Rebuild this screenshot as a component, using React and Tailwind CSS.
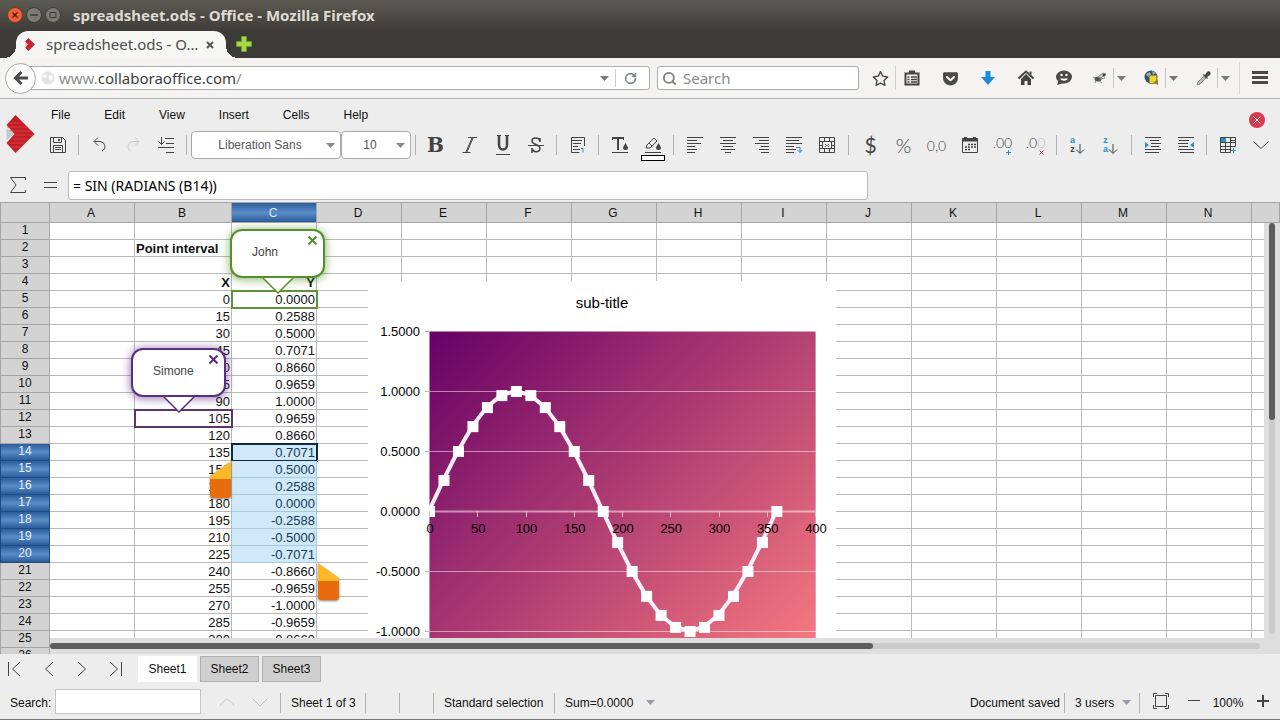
import React, { useState } from 'react'
import { FaRegStar, FaGetPocket, FaHouse, FaArrowLeft } from 'react-icons/fa6'
import { RotateCw, Search } from 'lucide-react'

const menus = ['File', 'Edit', 'View', 'Insert', 'Cells', 'Help']

const columns = ['A', 'B', 'C', 'D', 'E', 'F', 'G', 'H', 'I', 'J', 'K', 'L', 'M', 'N']

const points = Array.from({ length: 25 }, (_, i) => ({
  x: i * 15,
  y: Math.sin((i * 15 * Math.PI) / 180),
}))

const rows = Array.from({ length: 26 }, (_, i) => i + 1)

function format(value) {
  const text = value.toFixed(4)
  return text === '-0.0000' ? '0.0000' : text
}

function cellText(row, column) {
  if (row === 2 && column === 'B') return 'Point interval'
  if (row === 4) return column === 'B' ? 'X' : column === 'C' ? 'Y' : ''
  if (row < 5 || !points[row - 5]) return ''
  if (column === 'B') return String(points[row - 5].x)
  if (column === 'C') return format(points[row - 5].y)
  return ''
}

function Icon({ size = 16, children, className = '' }) {
  return (
    <svg
      width={size}
      height={size}
      viewBox={`0 0 ${size} ${size}`}
      fill="none"
      stroke="#444"
      strokeWidth="1"
      className={className}
      aria-hidden="true"
    >
      {children}
    </svg>
  )
}

function Caret({ className = '' }) {
  return (
    <svg width="9" height="5" viewBox="0 0 9 5" className={className} aria-hidden="true">
      <path d="M0 0h9L4.5 5z" fill="currentColor" />
    </svg>
  )
}

function Logo({ width, height }) {
  return (
    <svg width={width} height={height} viewBox="0 0 28 38" aria-hidden="true">
      <path d="M0 10 9 0 28 19 9 38 0 28l8-9z" fill="#c41d25" />
      <path d="M3 8h12M1 12h20M3 16h22M8 20h19M6 24h16M2 28h16M5 32h10" stroke="#d93a40" strokeWidth="1" />
      <path d="M0 13v12l8-6z" fill="#c3cbd4" />
    </svg>
  )
}

/* Browser chrome */

function TitleBar() {
  return (
    <div className="flex h-[30px] items-center bg-linear-to-b from-[#5c5b53] to-[#3e3d39] pl-[7px]">
      <div className="flex gap-[3px]">
        <button aria-label="Close" className="flex size-4 items-center justify-center rounded-full border border-[#7a3a20] bg-[#ec6138]">
          <Icon size={8}><path d="M1.5 1.5l5 5M6.5 1.5l-5 5" stroke="#5b2110" strokeWidth="1.5" /></Icon>
        </button>
        <button aria-label="Minimize" className="flex size-4 items-center justify-center rounded-full border border-[#3f3e39] bg-[#7b7a73]">
          <Icon size={8}><path d="M0 4h8" stroke="#3c3b37" strokeWidth="1.5" /></Icon>
        </button>
        <button aria-label="Maximize" className="flex size-4 items-center justify-center rounded-full border border-[#3f3e39] bg-[#7b7a73]">
          <Icon size={8}><path d="M1 1.5h6v5H1z" stroke="#3c3b37" /></Icon>
        </button>
      </div>
      <h1 className="ml-3 text-[15px] leading-none font-bold text-[#dfdbd2]">spreadsheet.ods - Office - Mozilla Firefox</h1>
    </div>
  )
}

function TabBar() {
  return (
    <div className="flex h-7 items-end bg-[#3c3b37] pl-1">
      <span className="size-3 bg-[radial-gradient(circle_at_0_0,transparent_12px,#f6f6f5_12px)]" />
      <div className="flex h-[27px] w-[210px] items-center rounded-t-[12px] bg-[#f6f6f5] pr-3 pl-2">
        <Logo width={12} height={13} />
        <span className="ml-2.5 flex-1 text-[15px] leading-none whitespace-nowrap text-[#4c4c4c]">spreadsheet.ods - O…</span>
        <button aria-label="Close tab">
          <Icon size={8}><path d="M1 1l6 6M7 1l-6 6" stroke="#555" strokeWidth="2" /></Icon>
        </button>
      </div>
      <span className="size-3 bg-[radial-gradient(circle_at_100%_0,transparent_12px,#f6f6f5_12px)]" />
      <button aria-label="New tab" className="mb-1.5 -ml-0.5">
        <Icon><path d="M5.5.5h5v5h5v5h-5v5h-5v-5h-5v-5h5z" fill="#a5d848" stroke="#6f9e2c" /></Icon>
      </button>
    </div>
  )
}

function NavButton({ label, className = 'w-[38px]', children }) {
  return (
    <button aria-label={label} className={`flex h-6 items-center justify-center text-[#4a4a4a] ${className}`}>
      {children}
    </button>
  )
}

function SplitButton({ label, children }) {
  return (
    <div className="flex w-[52px] items-center pl-1">
      <NavButton label={label} className="w-[26px]">{children}</NavButton>
      <button aria-label={`${label} options`} className="flex h-5 w-[15px] items-center justify-center border-l border-[#c4c4c4] text-[#777]">
        <Caret />
      </button>
    </div>
  )
}

function NavBar() {
  return (
    <div className="flex h-[41px] items-center border-b border-[#b0b0b0] bg-[#f4f3f2] pl-[5px]">
      <button aria-label="Back" className="z-10 flex size-[31px] shrink-0 items-center justify-center rounded-full border border-[#a8a8a8] bg-[#fbfbfb]">
        <Icon><path d="M8.500 2L2.500 8l6 6M3 8h12" stroke="#4a4a4a" strokeWidth="3" /></Icon>
      </button>
      <div className="-ml-2 flex h-6 flex-1 items-center rounded-r-[3px] border border-[#aaa] bg-white pl-3">
        <Icon size={14}>
          <circle cx="7" cy="7" r="6.5" fill="#e2e2e2" stroke="none" />
          <path d="M3 3l3 1-1 3-3-1zM8 5l3-1 1 3-2 3-2-2z" fill="#fff" stroke="none" />
        </Icon>
        <a href="#address" className="ml-1 flex-1 text-[15px] leading-none text-[#8e8e8e]">
          www.<span className="text-[#3c3c3c]">collaboraoffice.com</span>/
        </a>
        <button aria-label="History" className="px-1.5 text-[#777]"><Caret /></button>
        <button aria-label="Reload" className="flex h-[18px] w-[34px] items-center justify-center border-l border-[#ccc] pr-1">
          <RotateCw size={13} color="#7c868c" strokeWidth={3} />
        </button>
      </div>
      <label className="ml-[7px] flex h-6 w-[202px] items-center gap-1.5 rounded-[3px] border border-[#aaa] bg-white pl-1">
        <Search size={15} color="#7c7c7c" strokeWidth={3} className="shrink-0" />
        <input aria-label="Search the web" placeholder="Search" className="w-full text-[15px] leading-none placeholder:text-[#8a8a8a] focus:outline-none" />
      </label>
      <div className="ml-[7px] flex items-center">
        <NavButton label="Bookmark" className="w-[30px] border-r border-[#d0d0d0]"><FaRegStar size={17} /></NavButton>
        <NavButton label="Bookmarks" className="w-[32px]">
          <Icon>
            <path d="M1.5 3.5h13v11h-13z" strokeWidth="2" />
            <path d="M5 2h6" strokeWidth="3" />
            <path d="M3.5 7h2M7 7h6M3.5 9.5h2M7 9.5h6M3.5 12h2M7 12h6" strokeWidth="1.5" />
          </Icon>
        </NavButton>
        <NavButton label="Pocket" className="w-[41px] pl-[3px]"><FaGetPocket size={17} /></NavButton>
        <NavButton label="Downloads">
          <Icon><path d="M5.5 1h5v6H15l-7 8-7-8h4.5z" fill="#1e8ad6" stroke="none" /></Icon>
        </NavButton>
        <NavButton label="Home">
          <Icon>
            <path d="M.5 8.5L8 1.500l7.500 7" strokeWidth="2" />
            <path d="M3 9l5-5 5 5v6H9.500v-4h-3v4H3zM11.500 1.500h2V5l-2-2z" fill="#444" stroke="none" />
          </Icon>
        </NavButton>
        <NavButton label="Chat">
          <Icon>
            <ellipse cx="8" cy="7" rx="8" ry="6.5" fill="#4a4a4a" stroke="none" />
            <path d="M1 15l2-5 5 3z" fill="#4a4a4a" stroke="none" />
            <circle cx="5.5" cy="5" r="1.2" fill="#fff" stroke="none" />
            <circle cx="10.5" cy="5" r="1.2" fill="#fff" stroke="none" />
            <path d="M4 8.5c1.5 3 6.5 3 8 0z" fill="#fff" stroke="none" />
          </Icon>
        </NavButton>
        <SplitButton label="Debugger">
          <Icon>
            <ellipse cx="6" cy="9" rx="3.5" ry="2.5" fill="#555" stroke="none" />
            <path d="M6 7l5-4 3 1-5 4zM8 9l5-1M7 11l3 2M4 11l-1 2M3 8L1 7" stroke="#888" fill="#ccc" />
            <circle cx="12" cy="5" r="1.5" fill="#444" stroke="none" />
          </Icon>
        </SplitButton>
        <SplitButton label="Proxy">
          <Icon>
            <circle cx="7" cy="7" r="6.5" fill="#2d4f7c" stroke="none" />
            <path d="M2 4l4-2 1 3-3 2zM8 1l4 2-3 2z" fill="#9cb4a0" stroke="none" />
            <path d="M5.5 5.5h7v8h-7z" fill="#f2d231" stroke="#a88a17" />
            <path d="M9 13l5-4v6z" fill="#8c8a3a" stroke="none" />
          </Icon>
        </SplitButton>
        <SplitButton label="Color picker">
          <Icon>
            <path d="M1 15l1-3 6-6 2 2-6 6z" fill="#bbb" stroke="#888" />
            <path d="M7 5l4 4 1-1-1-1 3-2c2-2-1-5-3-3L9 5 8 4z" fill="#444" stroke="none" />
          </Icon>
        </SplitButton>
        <button aria-label="Open menu" className="flex h-8 w-[41px] items-center justify-center border-l border-[#d8d8d8]">
          <Icon><path d="M0 2.5h16M0 7.5h16M0 12.5h16" strokeWidth="3" stroke="#4a4a4a" /></Icon>
        </button>
      </div>
    </div>
  )
}

/* Office toolbars */

function Sep({ className = 'w-[9px]' }) {
  return (
    <div className={`flex shrink-0 justify-center ${className}`}>
      <span className="h-5 w-px bg-[#b4b4b4]" />
    </div>
  )
}

function Tool({ label, className = '', children }) {
  return (
    <button aria-label={label} title={label} className={`relative flex h-7 w-[33px] shrink-0 items-center justify-center text-[#444] ${className}`}>
      {children}
    </button>
  )
}

function ToolSelect({ label, value, className }) {
  return (
    <div className={`relative h-7 shrink-0 ${className}`}>
      <select aria-label={label} className="size-full appearance-none rounded-[4px] border border-[#aaa] bg-white pr-3 text-[12px] text-[#555] [text-align-last:center]">
        <option>{value}</option>
      </select>
      <Caret className="pointer-events-none absolute top-3 right-1.5 text-[#888]" />
    </div>
  )
}

function SortIcon({ first, last }) {
  return (
    <span className="flex items-end">
      <span className="flex flex-col text-[9px] leading-[9px] font-bold">
        <span className="text-[#2b8fc4]">{first}</span>
        <span className={last === 'a' ? 'text-[#2b8fc4]' : 'text-[#444]'}>{last}</span>
      </span>
      <Icon size={10}><path d="M5 0v9M1 5.500l4 4 4-4" /></Icon>
    </span>
  )
}

function Toolbar() {
  return (
    <div className="flex h-8 items-center">
      <Tool label="Save">
        <Icon>
          <path d="M.5.5h12l3 3v12H.5zM3.5.5v5h8v-5M3.500 15.500v-7h9v7M5 10.500h6M5 12.500h6" />
          <path d="M9 2v2" strokeWidth="2" />
        </Icon>
      </Tool>
      <Sep />
      <Tool label="Undo"><Icon><path d="M6 .5L2 4.500l4 4M2.500 4.500H8a5 5 0 0 1 2 9.500" /></Icon></Tool>
      <Tool label="Redo"><Icon><path d="M10 .5l4 4-4 4M13.500 4.500H8A5 5 0 0 0 6 14" stroke="#c8c8c8" /></Icon></Tool>
      <Tool label="Line spacing">
        <Icon><path d="M3.5 0v7M.5 4.5l3 3 3-3M7 1.5h9M8 6.5h8M0 10.5h16M8 15.5h8" /></Icon>
      </Tool>
      <Sep />
      <ToolSelect label="Font name" value="Liberation Sans" className="w-[150px]" />
      <ToolSelect label="Font size" value="10" className="w-[70px]" />
      <Sep />
      <Tool label="Bold" className="pr-0.5 font-['DejaVu_Serif',serif] text-[20px] font-bold">B</Tool>
      <Tool label="Italic">
        <Icon><path d="M6 .5h9M.5 15.5h8M11 1L5 15M10 1L4 15" /></Icon>
      </Tool>
      <Tool label="Underline">
        <Icon size={20}>
          <path d="M4 .5h4M12 .5h4M3 19.500h14" />
          <path d="M6 1v9c0 6 8 6 8 0V1" strokeWidth="2.500" />
        </Icon>
      </Tool>
      <Tool label="Strikethrough">
        <Icon><path d="M12 5V1M12 4C11 0 4 0 4 4c0 4 8 3 8 7.5 0 4.5-7 4-8 0M4 11v5" strokeWidth="1.5" /><path d="M0 8.5h16" /></Icon>
      </Tool>
      <Sep />
      <Tool label="Wrap text">
        <Icon>
          <path d="M14.5 9V.5H1.5v15h8M1 3.5h11M3 6.5h8M3 9.5h5M3 12.5h7" />
          <path d="M11 11.5h2v4" stroke="#2b8fc4" />
        </Icon>
      </Tool>
      <Sep />
      <Tool label="Font color">
        <Icon>
          <path d="M0 1h12M6 1v12" strokeWidth="2" />
          <path d="M0 15.5h16M.5 0v3M11.500 0v3" />
          <path d="M13.5 6l2.5 4.5a2.500 2.500 0 1 1-5 0z" fill="#444" stroke="none" />
        </Icon>
      </Tool>
      <Tool label="Background color">
        <Icon>
          <path d="M2 8l7-7 3 3-7 7H1zM4 6l3 3M0 15.5h16" />
          <path d="M13.5 6l2.5 4.5a2.500 2.500 0 1 1-5 0z" fill="#444" stroke="none" />
        </Icon>
        <span className="absolute -bottom-0.5 h-[6px] w-6 border border-black bg-white" />
      </Tool>
      <Sep />
      <Tool label="Align left"><Icon><path d="M0 .5h16M0 3.5h10M0 6.5h14M0 9.5h8M0 12.5h10M0 15.5h8" /></Icon></Tool>
      <Tool label="Center"><Icon><path d="M0 .5h16M3 3.5h10M0 6.5h16M3 9.5h10M1 12.5h14M5 15.5h6" /></Icon></Tool>
      <Tool label="Align right"><Icon><path d="M0 .5h16M6 3.5h10M2 6.5h14M8 9.5h8M6 12.5h10M8 15.5h8" /></Icon></Tool>
      <Tool label="Wrap">
        <Icon><path d="M0 .5h16M0 3.5h13M0 6.5h16M0 9.5h8M0 12.5h10M0 15.5h8" /><path d="M10 10.5h4v5M11.5 13l2.5 2.5 2-2.5" stroke="#2b8fc4" /></Icon>
      </Tool>
      <Tool label="Merge cells">
        <Icon><path d="M.5.5h15v15H.5zM0 4.5h16M0 11.5h16M5.5 0v5M10.5 0v5M5.5 11v5M10.5 11v5M0 8.5h3M13 8.5h3M3.5 4v8M12.5 4v8M6 7l1.5 1.5L6 10M10 7L8.5 8.5 10 10" /></Icon>
      </Tool>
      <Sep className="w-[11px]" />
      <Tool label="Currency" className="font-['Lato',sans-serif] text-[21px]">$</Tool>
      <Tool label="Percent" className="font-['Lato',sans-serif] text-[20px] font-light">%</Tool>
      <Tool label="Number" className="font-['Lato',sans-serif] text-[14px] font-light">0,0</Tool>
      <Tool label="Date">
        <Icon><path d="M.5 1.5h15v14H.5z" /><path d="M0 3h16M3.5 0v3M12.5 0v3" strokeWidth="3" /><path d="M6 7.5h2M9 7.5h2M12 7.5h2M3 10h2M6 10h2M9 10h2M12 10h2M3 12.5h2M6 12.5h2" strokeWidth="1.5" /></Icon>
      </Tool>
      <Tool label="Add decimal place" className="pb-1.5 font-['Lato',sans-serif] text-[14px] font-light">
        .00
        <Icon size={5} className="absolute right-2 bottom-1"><path d="M0 2.5h5M2.5 0v5" stroke="#2b8fc4" /></Icon>
      </Tool>
      <Tool label="Delete decimal place" className="pb-1.5 font-['Lato',sans-serif] text-[14px] font-light">
        .0<span className="text-[#bbb]">0</span>
        <Icon size={5} className="absolute right-2 bottom-1"><path d="M.5.5l4 4M4.5.5l-4 4" stroke="#a8485a" /></Icon>
      </Tool>
      <Sep />
      <Tool label="Sort ascending"><SortIcon first="a" last="z" /></Tool>
      <Tool label="Sort descending"><SortIcon first="z" last="a" /></Tool>
      <Sep />
      <Tool label="Increase indent">
        <Icon><path d="M0 .5h16M5 3.5h9M6 6.5h10M6 9.5h8M0 12.5h16M0 15.5h14" /><path d="M0 5v6l4-3z" fill="#2b8fc4" stroke="none" /></Icon>
      </Tool>
      <Tool label="Decrease indent">
        <Icon><path d="M0 .5h16M1 3.5h10M0 6.5h10M1 9.5h9M0 12.5h16M2 15.5h14" /><path d="M16 5v6l-4-3z" fill="#2b8fc4" stroke="none" /></Icon>
      </Tool>
      <Sep />
      <Tool label="Insert table">
        <Icon><path d="M.5.5h15v9M.5 5.5h15M.5 9.5h15M.5 12.5h10M.5.5v15h10M5.5.5v15M10.5.5v15M10 3.5h5" /><path d="M1 1h5v4H1z" fill="#2b8fc4" stroke="none" /><path d="M11 13.5h5M13.5 11v5" stroke="#2b8fc4" /></Icon>
      </Tool>
      <Tool label="More"><Icon><path d="M.5 4.5l7.500 7 7.500-7" /></Icon></Tool>
    </div>
  )
}

function OfficeHeader() {
  const [formula, setFormula] = useState('= SIN (RADIANS (B14))')
  return (
    <header className="bg-[#ededed]">
      <div className="flex h-[72px] pt-1.5">
        <div className="w-[41px] shrink-0 pt-2.5 pl-[6px]">
          <Logo width={29} height={38} />
        </div>
        <div className="flex-1">
          <div className="flex h-5 items-center justify-between pr-[15px] pl-2.5">
            <nav className="flex gap-[34px] text-[12px] leading-none text-[#111]">
              {menus.map((name) => (
                <a key={name} href={`#${name.toLowerCase()}`}>{name}</a>
              ))}
            </nav>
            <button aria-label="Close document" className="mt-2.5 flex size-4 items-center justify-center rounded-full bg-[#d63a4f]">
              <Icon size={8}><path d="M.5.5l7 7M7.5.5l-7 7" stroke="#fff" /></Icon>
            </button>
          </div>
          <div className="mt-1"><Toolbar /></div>
        </div>
      </div>
      <div className="flex h-[31px] items-start gap-[18px] pl-2.5">
        <button aria-label="Sum" className="mt-1.5">
          <Icon><path d="M15.5 3V.5H.5L6 8 .5 15.5h15V13" /></Icon>
        </button>
        <button aria-label="Formula" className="mt-1.5">
          <Icon size={13} className="my-0.5"><path d="M0 3.5h13M0 8.5h13" /></Icon>
        </button>
        <input
          aria-label="Formula bar"
          value={formula}
          onChange={(e) => setFormula(e.target.value)}
          className="-ml-[7px] h-[29px] max-w-[800px] flex-1 rounded-[3px] border border-[#bbb] bg-white px-1 font-['Noto_Sans',sans-serif] text-[14px] text-black"
        />
      </div>
    </header>
  )
}

/* Sheet */

function Presence({ name, tone }) {
  const [open, setOpen] = useState(true)
  const john = tone === 'green'
  const color = john ? '#54902a' : '#5c2d82'
  return (
    <>
      <span className={`absolute -top-px -right-0.5 -bottom-0.5 -left-px z-10 border-2 ${john ? 'border-[#5f9336]' : 'border-[#5c3570]'}`} />
      {open && (
        <div className={`absolute bottom-[13px] z-20 w-[95px] text-left ${john ? '-left-0.5' : '-left-1'}`}>
          <div className={`flex h-[49px] items-center rounded-[12px] border-2 bg-white pb-1 pl-5 text-[12px] text-[#444] ${john ? 'border-[#54902a] shadow-[0_1px_9px_1px_rgba(84,144,42,0.6)]' : 'border-[#5c2d82] shadow-[0_1px_9px_1px_rgba(92,45,130,0.6)]'}`}>
            {name}
            <button aria-label={`Dismiss ${name}`} onClick={() => setOpen(false)} className="absolute top-[7px] right-2">
              <Icon size={9}><path d="M.5.5l8 8M8.5.5l-8 8" stroke={color} strokeWidth="2" /></Icon>
            </button>
          </div>
          <svg width="32" height="18" viewBox="0 0 32 18" className="mx-auto -mt-0.5 block" aria-hidden="true">
            <path d="M1 2L16 17 31 2z" fill="#fff" />
            <path d="M1 2L16 17 31 2" fill="none" stroke={color} strokeWidth="1.5" />
          </svg>
        </div>
      )}
    </>
  )
}

function Handle({ flip, className }) {
  return (
    <svg width="23" height="39" viewBox="0 0 23 39" className={`absolute z-10 drop-shadow-[0_1px_1px_rgba(0,0,0,0.5)] ${className}`} aria-hidden="true">
      <g transform={flip ? 'translate(23 0) scale(-1 1)' : undefined}>
        <path d="M1 0l21 15v5H1z" fill="#fbb829" />
        <path d="M1 18h21v16a3 3 0 0 1-3 3H4a3 3 0 0 1-3-3z" fill="#e86c0e" />
      </g>
    </svg>
  )
}

function Cell({ row, column }) {
  const selected = column === 'C' && row >= 14 && row <= 20
  const bold = row === 2 || row === 4
  return (
    <td
      className={`relative h-[17px] border-r border-b p-0 pt-0.5 text-[13px] leading-[14px] whitespace-nowrap ${
        selected ? 'border-[#a9c9dc] bg-[#cfe9f8] text-[#173a55]' : 'border-[#b9b9b9] text-[#111]'
      } ${bold ? 'font-bold' : ''} ${row === 2 ? 'pl-px text-left' : 'pr-px text-right'}`}
    >
      {cellText(row, column)}
      {column === 'C' && row === 5 && <Presence name="John" tone="green" />}
      {column === 'B' && row === 12 && <Presence name="Simone" tone="purple" />}
      {column === 'C' && row === 14 && <span className="absolute -top-px -right-0.5 -bottom-0.5 -left-px border-2 border-[#0d2b45]" />}
      {column === 'C' && row === 15 && <Handle flip className="top-0 -left-[23px]" />}
      {column === 'C' && row === 20 && <Handle className="top-[17px] left-[85px]" />}
    </td>
  )
}

const plotX = (x) => 61 + (x * 386) / 400
const plotY = (y) => 230 - y * 120

function Chart() {
  return (
    <svg width="468" height="440" viewBox="0 0 468 440" className="absolute top-[79px] left-[368px] bg-white text-[13px]" role="img" aria-label="Sine chart">
      <defs>
        <linearGradient id="plot" gradientUnits="userSpaceOnUse" x1="61" y1="50" x2="431" y2="420">
          <stop offset="0" stopColor="#660066" />
          <stop offset="1" stopColor="#ff8080" />
        </linearGradient>
      </defs>
      <text x="234" y="27" textAnchor="middle" fontSize="15">sub-title</text>
      <rect x="61" y="50" width="387" height="360" fill="url(#plot)" />
      <path d="M61.5 50v360M447.5 50v360" stroke="#d9b3cc" opacity="0.7" />
      {[1.5, 1, 0.5, 0, -0.5, -1].map((v) => (
        <g key={v}>
          <path d={`M61 ${plotY(v) + 0.5}h387`} stroke="#fff" strokeWidth={v === 0 ? 2 : 1} opacity="0.5" />
          <path d={`M57 ${plotY(v) + 0.5}h4`} stroke="#b3b3b3" />
          <text x="52" y={plotY(v) + 5} textAnchor="end">{v.toFixed(4)}</text>
        </g>
      ))}
      <polyline points={points.map((p) => `${plotX(p.x)},${plotY(p.y)}`).join(' ')} fill="none" stroke="#ffeefa" strokeWidth="4" />
      {points.map((p) => (
        <rect key={p.x} x={plotX(p.x) - 5} y={plotY(p.y) - 5} width="11" height="11" fill="#fff" />
      ))}
      {[0, 50, 100, 150, 200, 250, 300, 350, 400].map((v) => (
        <g key={v}>
          <path d={`M${Math.round(plotX(v)) + 0.5} 230v6`} stroke="#e0b9cc" />
          <text x={plotX(v) + 1} y="252" textAnchor="middle">{v}</text>
        </g>
      ))}
    </svg>
  )
}

function Sheet() {
  return (
    <main className="relative min-h-0 flex-1 overflow-hidden bg-white">
      <table className="w-full table-fixed border-separate border-spacing-0">
        <colgroup>
          <col className="w-[50px]" />
          {columns.map((c) => (
            <col key={c} className={c === 'B' ? 'w-[97px]' : 'w-[85px]'} />
          ))}
          <col />
        </colgroup>
        <thead>
          <tr className="text-[12px] leading-none">
            <th className="h-[21px] border border-[#a5a5a5] bg-[#d3d3d3] p-0" />
            {columns.map((c) => (
              <th
                key={c}
                scope="col"
                className={`border-y border-r border-[#a5a5a5] p-0 pr-0.5 font-normal ${
                  c === 'C' ? 'bg-linear-to-b from-[#2c5d9c] via-[#5a8cc6] to-[#2c5d9c] text-[#dbe8f6]' : 'bg-[#d3d3d3] text-[#111]'
                }`}
              >
                {c}
              </th>
            ))}
            <th className="border-y border-r border-[#a5a5a5] bg-[#d3d3d3] p-0" />
          </tr>
        </thead>
        <tbody>
          {rows.map((row) => (
            <tr key={row}>
              <th
                scope="row"
                className={`h-[17px] border-x border-b p-0 pb-px text-[12px] leading-[15px] font-normal ${
                  row >= 14 && row <= 20
                    ? 'border-[#1f4a80] bg-linear-to-b from-[#2c5d9c] via-[#5a8cc6] to-[#2c5d9c] text-[#e6eff9]'
                    : 'border-[#a5a5a5] bg-[#d3d3d3] text-[#111]'
                }`}
              >
                {row}
              </th>
              {columns.map((c) => (
                <Cell key={c} row={row} column={c} />
              ))}
              <td className="border-b border-[#b9b9b9] p-0" />
            </tr>
          ))}
        </tbody>
      </table>
      <Chart />
      <div className="absolute top-[21px] right-0 bottom-0 w-4 bg-[#dedede] pb-5">
        <div className="mx-[5px] h-full rounded-full bg-[#cbcbcb]">
          <div className="h-[48%] rounded-full bg-[#5c5d5c]" />
        </div>
      </div>
      <div className="absolute right-0 bottom-0 left-[50px] h-4 bg-[#dedede] pt-[5px] pr-5">
        <div className="h-[6px] rounded-full bg-[#cbcbcb]">
          <div className="h-full w-[68%] rounded-full bg-[#5c5d5c]" />
        </div>
      </div>
    </main>
  )
}

/* Bottom bars */

function SheetTabs() {
  const [active, setActive] = useState('Sheet1')
  return (
    <div className="flex h-[30px] items-center bg-[#ededed] pb-px">
      <div className="flex w-[138px]">
        <Tool label="First sheet"><Icon className="-ml-1"><path d="M1.5 1v14M13 1L5.5 8l7.500 7" /></Icon></Tool>
        <Tool label="Previous sheet"><Icon><path d="M11 1L3.5 8l7.500 7" /></Icon></Tool>
        <Tool label="Next sheet"><Icon><path d="M3 1l7.500 7L3 15" /></Icon></Tool>
        <Tool label="Last sheet"><Icon><path d="M2 1l7.500 7L2 15M13.5 1v14" /></Icon></Tool>
      </div>
      <div className="flex gap-[3px]">
        {['Sheet1', 'Sheet2', 'Sheet3'].map((name) => (
          <button
            key={name}
            onClick={() => setActive(name)}
            className={`h-[26px] w-[59px] border text-[12px] text-[#111] ${
              name === active ? 'border-white bg-white' : 'border-[#b0b0b0] bg-[#cfcfcf]'
            }`}
          >
            {name}
          </button>
        ))}
      </div>
    </div>
  )
}

function StatusSelect({ label, value, className }) {
  return (
    <div className={`relative flex items-center ${className}`}>
      <select aria-label={label} className="w-full appearance-none bg-transparent">
        <option>{value}</option>
      </select>
      <Caret className="pointer-events-none absolute right-0 text-[#99a]" />
    </div>
  )
}

function StatusBar() {
  return (
    <footer className="flex h-9 items-center border-b border-[#777] bg-[#ededed] pt-0.5 pl-2.5 text-[12px] text-[#111]">
      <label htmlFor="find" className="w-[45px]">Search:</label>
      <input id="find" className="mb-0.5 h-[25px] w-[146px] border border-[#c4c4c4] bg-white px-1" />
      <div className="ml-[9px] flex">
        <Tool label="Search up"><Icon><path d="M.5 11L8 3.5l7.500 7.500" stroke="#c2c2c2" /></Icon></Tool>
        <Tool label="Search down"><Icon><path d="M.5 3.5L8 11l7.500-7.500" stroke="#c2c2c2" /></Icon></Tool>
      </div>
      <Sep />
      <span className="ml-1.5 w-[70px] whitespace-nowrap">Sheet 1 of 3</span>
      <Sep />
      <Sep className="ml-[25px] w-[9px]" />
      <Sep className="ml-[25px] w-[9px]" />
      <span className="ml-1.5 w-[106px] whitespace-nowrap">Standard selection</span>
      <Sep />
      <StatusSelect label="Function" value="Sum=0.0000" className="ml-1.5 w-[90px]" />
      <div className="ml-auto flex items-center pr-px">
        <span>Document saved</span>
        <Sep />
        <StatusSelect label="Users" value="3 users" className="ml-1.5 w-14" />
        <Sep className="ml-1 w-[9px]" />
        <Tool label="Fit page">
          <Icon className="mb-1"><path d="M2.5 2.5h11v11h-11zM.5 4V.5H4M12 .5h3.5V4M15.5 12v3.5H12M4 15.5H.5V12" /></Icon>
        </Tool>
        <Tool label="Zoom out"><Icon size={12} className="mb-1"><path d="M0 5.5h12" /></Icon></Tool>
        <span className="w-9 text-center">100%</span>
        <Tool label="Zoom in"><Icon size={12} className="mb-1"><path d="M0 6h12M6 0v12" strokeWidth="2" /></Icon></Tool>
      </div>
    </footer>
  )
}

export default function App() {
  return (
    <div className="flex h-screen flex-col overflow-hidden bg-[#ededed] font-['Liberation_Sans',Arial,sans-serif]">
      <div className="font-['Noto_Sans',sans-serif]">
        <TitleBar />
        <TabBar />
        <NavBar />
      </div>
      <OfficeHeader />
      <Sheet />
      <SheetTabs />
      <StatusBar />
    </div>
  )
}
